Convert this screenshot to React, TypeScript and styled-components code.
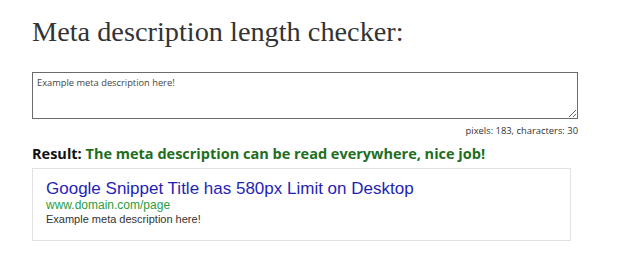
import styled, { createGlobalStyle } from 'styled-components';

const GlobalStyle = createGlobalStyle`
  html, body {
    margin: 0;
    padding: 0;
    background: #fff;
  }
`;

const Page = styled.div`
  padding: 14px 66px 0 32px;
  width: 546px;
`;

const Heading = styled.h1`
  margin: 0;
  font-family: Georgia, 'Liberation Serif', serif;
  font-weight: normal;
  font-size: 28.3px;
  line-height: 36px;
  color: #333;
`;

const Input = styled.textarea`
  display: block;
  box-sizing: border-box;
  margin-top: 22px;
  width: 546px;
  height: 47px;
  padding: 4px 4px;
  border: 1px solid #6b6b6b;
  font-family: 'Open Sans', sans-serif;
  font-size: 9.3px;
  line-height: 12px;
  color: #444;
  resize: vertical;
  outline: none;
`;

const Counter = styled.div`
  margin-top: 5px;
  text-align: right;
  font-family: 'Open Sans', sans-serif;
  font-size: 9.4px;
  line-height: 14px;
  color: #333;
`;

const Result = styled.div`
  margin-top: 6px;
  font-family: 'Open Sans', sans-serif;
  font-weight: bold;
  font-size: 14.5px;
  line-height: 20px;
  color: #111;
`;

const Verdict = styled.span<{ $ok: boolean }>`
  color: ${p => (p.$ok ? '#1e6e1e' : '#b22222')};
`;

const Snippet = styled.div`
  box-sizing: border-box;
  margin-top: 4px;
  width: 539px;
  height: 73px;
  padding: 10px 13px;
  border: 1px solid #e2e2e2;
  font-family: Arial, 'Liberation Sans', sans-serif;
`;

const SnippetTitle = styled.div`
  font-size: 17px;
  line-height: 20px;
  color: #1f1fb8;
`;

const SnippetUrl = styled.div`
  font-size: 12px;
  line-height: 13px;
  color: #2a9d3f;
`;

const SnippetText = styled.div`
  font-size: 11px;
  line-height: 14px;
  color: #333;
`;

export default function App() {
  const text = 'Example meta description here!';
  return (
    <>
      <GlobalStyle />
      <Page>
        <Heading>Meta description length checker:</Heading>
        <Input defaultValue={text} />
        <Counter>pixels: 183, characters: {text.length}</Counter>
        <Result>
          Result: <Verdict $ok>The meta description can be read everywhere, nice job!</Verdict>
        </Result>
        <Snippet>
          <SnippetTitle>Google Snippet Title has 580px Limit on Desktop</SnippetTitle>
          <SnippetUrl>www.domain.com/page</SnippetUrl>
          <SnippetText>{text}</SnippetText>
        </Snippet>
      </Page>
    </>
  );
}
